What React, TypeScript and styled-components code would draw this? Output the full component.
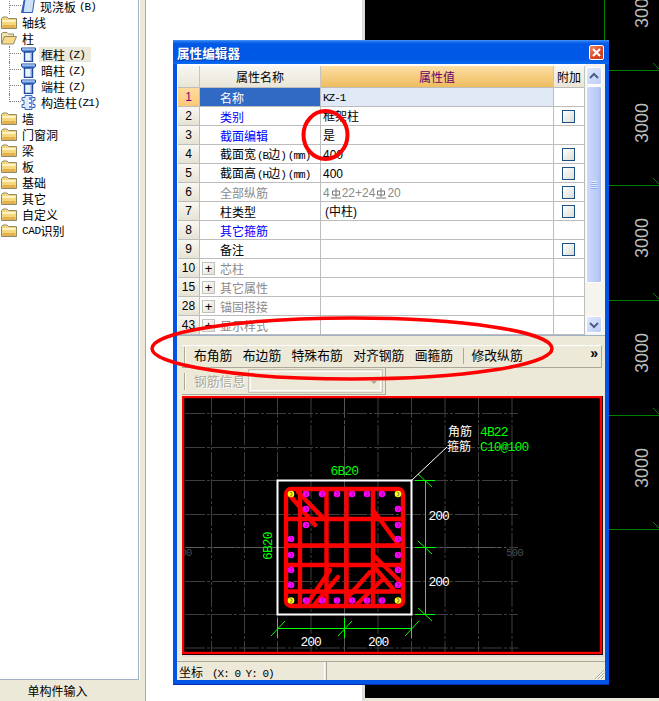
import React from "react";
import styled, { createGlobalStyle } from "styled-components";

const CJK = `"Noto Sans CJK SC", "Liberation Sans", sans-serif`;
const MONO = `"Liberation Mono", "Noto Sans CJK SC", monospace`;

const Global = createGlobalStyle`
  html, body { margin: 0; padding: 0; background: #fff; overflow: hidden; }
  * { box-sizing: border-box; }
`;

const Page = styled.div`
  position: relative;
  display: flex;
  width: 659px;
  height: 701px;
  overflow: hidden;
  font: 12px/16px ${CJK};
  color: #000;
`;

/* ---------- left tree ---------- */
const TreePanel = styled.div`
  display: flex;
  flex-direction: column;
  width: 140px;
  height: 100%;
  padding-right: 1px;
  background: #fff;
`;
const TreeScroll = styled.div`
  flex: 1;
  overflow: hidden;
  border-right: 1px solid #9fb0c6;
  border-bottom: 1px solid #9fb0c6;
`;
const TreeList = styled.div`
  margin-top: -2px;
`;
const TreeRow = styled.div`
  display: flex;
  align-items: center;
  height: 16px;
  padding-left: 1px;
  white-space: nowrap;
`;
const ChildRow = styled.div`
  display: flex;
  align-items: center;
  height: 16px;
  padding-left: 9px;
  white-space: nowrap;
`;
const Connector = styled.span<{ $last?: boolean }>`
  position: relative;
  align-self: flex-start;
  flex: none;
  width: 12px;
  height: ${(p) => (p.$last ? "8px" : "16px")};
  border-left: 1px dotted #808080;
  &::after {
    content: "";
    position: absolute;
    left: 0;
    right: 0;
    top: 7px;
    height: 1px;
    background: repeating-linear-gradient(90deg, #808080 0 1px, transparent 1px 2px);
  }
`;
const TreeLabel = styled.span<{ $selected?: boolean }>`
  display: inline-flex;
  align-items: center;
  height: 15px;
  margin-left: 3px;
  padding: 1px ${(p) => (p.$selected ? "6px" : "2px")} 0 2px;
  background: ${(p) => (p.$selected ? "#ECE9D8" : "transparent")};
`;
const Lat = styled.span<{ $gap?: number; $track?: number }>`
  font: 11px/14px ${MONO};
  letter-spacing: ${(p) => p.$track ?? -1}px;
  margin-left: ${(p) => p.$gap ?? 0}px;
  color: inherit;
`;
const TabLabel = styled.div`
  height: 21px;
  margin-right: -1px;
  background: #ece9d8;
  text-align: center;
  line-height: 22px;
  padding-right: 25px;
`;
const Splitter = styled.div`
  width: 6px;
  height: 100%;
  background: #ece9d8;
  border-right: 1px solid #a9a89c;
`;
const Workspace = styled.div`
  width: 219px;
  height: 100%;
  background: #fff;
  border-right: 3px solid #dcdcd8;
`;
const CadColumn = styled.div`
  flex: 1;
  display: flex;
  flex-direction: column;
  height: 100%;
`;
const CadSvg = styled.svg`
  display: block;
  flex: 1;
  width: 100%;
  min-height: 0;
  background: #000;
`;
const CadStrip = styled.div`
  height: 3px;
  background: #ece9d8;
`;

/* ---------- floating dialog ---------- */
const Dialog = styled.div`
  position: absolute;
  left: 173px;
  top: 40px;
  width: 436px;
  height: 645px;
  display: flex;
  flex-direction: column;
  background: #0054e3;
  border-top: 1px solid #3d8bf5;
  border-bottom: 1px solid #0a2fb0;
`;
const TitleBar = styled.div`
  flex: none;
  height: 23px;
  display: flex;
  align-items: center;
  justify-content: space-between;
  padding: 0 5px 0 4px;
  background: linear-gradient(#2a7bf0 0, #0058e6 12%, #0058e6 80%, #0a6cf2 100%);
`;
const TitleText = styled.span`
  font: 700 12.6px/16px ${CJK};
  color: #fff;
  text-shadow: 1px 1px 0 #0a3bb0;
`;
const CloseButton = styled.button`
  display: flex;
  align-items: center;
  justify-content: center;
  width: 15px;
  height: 15px;
  padding: 0;
  border: 1px solid #fff;
  border-radius: 2px;
  background: linear-gradient(135deg, #f08a6a, #d9431f 60%, #c73a1a);
`;
const Client = styled.div`
  flex: 1;
  min-height: 0;
  display: flex;
  flex-direction: column;
  margin: 0 4px 4px;
  background: #ece9d8;
`;
const GridArea = styled.div`
  flex: none;
  display: flex;
  height: 272px;
  padding: 2px 0 0 1px;
  background: #fff;
  border-bottom: 1px solid #9db0c6;
`;
const Table = styled.div`
  width: 407px;
  height: 269px;
  overflow: hidden;
`;
const Row = styled.div<{ $header?: boolean }>`
  display: grid;
  grid-template-columns: 22px 121px 233px 31px;
  height: ${(p) => (p.$header ? "22px" : "19px")};
`;
const NumCell = styled.div<{ $active?: boolean }>`
  display: flex;
  align-items: center;
  justify-content: center;
  font: 12px/16px "Liberation Sans", sans-serif;
  color: ${(p) => (p.$active ? "#800080" : "#000")};
  background: ${(p) =>
    p.$active ? "linear-gradient(#ffdc9e, #fbc878)" : "linear-gradient(#f8f7f1, #e6e3d5)"};
  border-right: 1px solid #bdbdbd;
  border-bottom: 1px solid #bdbdbd;
`;
const HeadCell = styled.div<{ $value?: boolean }>`
  display: flex;
  align-items: center;
  justify-content: center;
  color: ${(p) => (p.$value ? "#6a006a" : "#000")};
  background: ${(p) =>
    p.$value ? "linear-gradient(#fbdfa4, #efbc5f)" : "linear-gradient(#f8f7f1, #e9e6d8)"};
  border-right: 1px solid #c4c4c0;
  border-bottom: 1px solid #bdbdbd;
`;
const NameCell = styled.div<{ $tone?: "blue" | "grey"; $active?: boolean; $group?: boolean }>`
  display: flex;
  align-items: center;
  gap: 5px;
  padding: 1px 0 0 ${(p) => (p.$group ? "2px" : "20px")};
  white-space: nowrap;
  overflow: hidden;
  color: ${(p) =>
    p.$active ? "#fff" : p.$tone === "blue" ? "#0000ff" : p.$tone === "grey" ? "#8a8a8a" : "#000"};
  background: ${(p) => (p.$active ? "#316ac5" : "#fff")};
  border-right: 1px solid #bdbdbd;
  border-bottom: 1px solid #bdbdbd;
`;
const ValueCell = styled.div<{ $active?: boolean; $grey?: boolean }>`
  display: flex;
  align-items: center;
  padding: 1px 0 0 2px;
  white-space: nowrap;
  font-family: "Liberation Sans", ${CJK};
  color: ${(p) => (p.$grey ? "#8a8a8a" : "#000")};
  background: ${(p) => (p.$active ? "#e0e9f5" : "#fff")};
  border-right: 1px solid #bdbdbd;
  border-bottom: 1px solid #bdbdbd;
`;
const Indented = styled.span`
  margin-left: 2px;
`;
const AddCell = styled.div`
  display: flex;
  align-items: center;
  justify-content: center;
  padding-right: 1px;
  background: #fff;
  border-right: 1px solid #bdbdbd;
  border-bottom: 1px solid #bdbdbd;
`;
const Check = styled.span`
  display: block;
  width: 13px;
  height: 13px;
  border: 1px solid #1c5180;
  background: linear-gradient(135deg, #fff, #dcdcd6);
`;
const Expander = styled.span`
  flex: none;
  display: flex;
  align-items: center;
  justify-content: center;
  width: 13px;
  height: 13px;
  margin-top: -1px;
  border: 1px solid #c2c2bc;
  background: linear-gradient(135deg, #fff, #e2e0d6);
  font: 13px/11px "Liberation Sans", sans-serif;
  color: #000;
`;

/* scrollbar */
const ScrollBar = styled.div`
  flex: 1;
  display: flex;
  flex-direction: column;
  align-items: center;
  margin-top: -2px;
  padding: 3px 2px 2px 0;
  background: #f5f5ee;
`;
const ScrollButton = styled.div<{ $h: number }>`
  flex: none;
  display: flex;
  align-items: center;
  justify-content: center;
  width: 16px;
  height: ${(p) => p.$h}px;
  border: 1px solid #fff;
  border-radius: 2px;
  background: linear-gradient(135deg, #dfe8fd, #bccdf7);
`;
const ScrollThumb = styled.div`
  flex: none;
  display: flex;
  flex-direction: column;
  justify-content: center;
  align-items: center;
  gap: 1px;
  width: 16px;
  height: 197px;
  margin-top: 1px;
  border: 1px solid #fff;
  border-radius: 2px;
  background: linear-gradient(90deg, #ccd9fa, #b9cbf6 70%, #a9bef0);
`;
const GripLine = styled.i`
  display: block;
  width: 6px;
  height: 1px;
  background: #e8efff;
  box-shadow: 0 1px 0 #8faaf0;
`;
const ScrollSpacer = styled.div`
  flex: 1;
`;

/* toolbars */
const Toolbar = styled.div`
  flex: none;
  display: flex;
  align-items: center;
  height: 23px;
  margin: 9px 3px 0 5px;
  padding: 0 0 3px 2px;
  border-top: 1px solid #fff;
  border-right: 1px solid #aca899;
  border-bottom: 1px solid #aca899;
  font-size: 12.8px;
`;
const Handle = styled.span`
  flex: none;
  width: 2px;
  height: 17px;
  margin-right: 8px;
  border-left: 1px solid #aca899;
  border-right: 1px solid #fff;
`;
const ToolItem = styled.span`
  flex: none;
  margin-right: 10.4px;
  white-space: nowrap;
`;
const ToolSep = styled.span`
  flex: none;
  width: 1px;
  height: 16px;
  margin: 2px 8px 0 -1px;
  background: #aca899;
`;
const Overflow = styled.span`
  margin-left: auto;
  margin-right: 3px;
  margin-top: -4px;
  font: 700 14px/12px "Liberation Sans", sans-serif;
`;
const SubBar = styled.div`
  flex: none;
  display: flex;
  align-items: center;
  width: 204px;
  height: 27px;
  margin: 0 0 1px 5px;
  padding-left: 2px;
  border-right: 1px solid #aca899;
  border-bottom: 1px solid #aca899;
`;
const DisabledLabel = styled.span`
  flex: none;
  width: 54px;
  font-size: 12.8px;
  color: #aca899;
  text-shadow: 1px 1px 0 #fff;
`;
const Combo = styled.div`
  position: relative;
  flex: none;
  width: 135px;
  height: 24px;
  border: 1px solid #c9c6b6;
  outline: 1px solid #fff;
  outline-offset: -3px;
`;
const ComboArrow = styled.span`
  position: absolute;
  right: 5px;
  top: 11px;
  width: 0;
  height: 0;
  border: 3px solid transparent;
  border-top-color: #aca899;
`;
const CanvasFrame = styled.div`
  flex: none;
  width: 423px;
  height: 261px;
  margin-left: 5px;
  border-right: 2px solid #dfdfd8;
  border-bottom: 2px solid #dfdfd8;
`;
const CanvasSvg = styled.svg`
  display: block;
  width: 421px;
  height: 259px;
`;
const StatusBar = styled.div`
  position: relative;
  flex: 1;
  min-height: 0;
  display: flex;
  margin-top: 4px;
  border-top: 1px solid #aca899;
`;
const StatusCell = styled.div`
  flex: none;
  width: 148px;
  padding: 2px 0 0 2px;
  white-space: nowrap;
  border-right: 1px solid #fff;
`;
const StatusGap = styled.div`
  flex: none;
  width: 2px;
  margin-right: 1px;
  border-right: 1px solid #aca899;
`;
const Grip = styled.svg`
  position: absolute;
  right: 0;
  bottom: 0;
`;
const Overlay = styled.svg`
  position: absolute;
  left: 0;
  top: 0;
  width: 659px;
  height: 701px;
  pointer-events: none;
`;
const RebarSvg = styled.svg`
  margin: 0 1px;
`;

/* ---------- icons ---------- */
const FolderIcon = () => (
  <svg width="16" height="14" viewBox="0 0 16 14">
    <path d="M.5 3.5 2 2h4l1.5 1.5h8v10H.5z" fill="#f6d77f" stroke="#8d8a6a" />
    <path d="M1.5 5h13v2h-13z" fill="#fff3c4" />
    <path d="M1.5 10h13v3h-13z" fill="#e4b24a" />
  </svg>
);
const OpenFolderIcon = () => (
  <svg width="16" height="14" viewBox="0 0 16 14">
    <path d="M.5 13V2.5L2 1.5h4l1.5 1.5h5v2.5" fill="#f4e4ae" stroke="#8d8a6a" />
    <path d="M.5 13 3.5 5.5h12l-3 7.5z" fill="#f8d98a" stroke="#8d8a6a" />
  </svg>
);
const ColumnIcon = () => (
  <svg width="15" height="15" viewBox="0 0 15 15">
    <path d="M.5 1h14v2.5l-2 1.5h-10L.5 3.5z" fill="#5d8fe0" stroke="#1f4a9c" />
    <path d="M1 1.5h13v1H1z" fill="#cfe0fb" />
    <path d="M3.5 5h8v9.5h-8z" fill="#eaf1fd" stroke="#1f4a9c" strokeWidth="1.4" />
    <path d="M9.5 5.5h1.5v8.5H9.500z" fill="#7ea6ea" />
  </svg>
);
const ConstructIcon = () => (
  <svg width="15" height="15" viewBox="0 0 15 15">
    <path d="M4 .5h7v2h3v3h-2v4h2v3h-3v2H4v-2H1v-3h2v-4H1v-3h3z" fill="#dfe9fb" stroke="#3b65b5" />
    <path d="M8 2h3v11H8z" fill="#5f8de0" />
    <path d="M8 5h2v2H8zM8 9h2v2H8z" fill="#fff" />
  </svg>
);
const SlabIcon = () => (
  <svg width="14" height="16" viewBox="0 0 14 16">
    <path d="M3.5.5h10l-2 14H.5z" fill="#cfe0fb" stroke="#2d5cb0" />
    <path d="M.8 14.500 3.5.5l1 .6L2.600 14z" fill="#2d5cb0" />
  </svg>
);
const Chevron = ({ down }: { down?: boolean }) => (
  <svg width="10" height="8" viewBox="0 0 10 8">
    <path d={down ? "M1 2l4 4 4-4" : "M1 6l4-4 4 4"} fill="none" stroke="#4d6185" strokeWidth="2" />
  </svg>
);
const RebarGlyph = () => (
  <RebarSvg width="10" height="12" viewBox="0 0 10 12">
    <path d="M1.5 4h7v4h-7zM5 1v9M0 11h10" fill="none" stroke="#777" strokeWidth="1" />
  </RebarSvg>
);

/* ---------- data ---------- */
type Prop = {
  n: string;
  name: React.ReactNode;
  tone?: "blue" | "grey";
  value?: React.ReactNode;
  valueGrey?: boolean;
  check?: boolean;
  group?: boolean;
  active?: boolean;
};

const rows: Prop[] = [
  { n: "1", name: "名称", value: <Lat>KZ-1</Lat>, active: true },
  { n: "2", name: "类别", tone: "blue", value: "框架柱", check: true },
  { n: "3", name: "截面编辑", tone: "blue", value: "是" },
  {
    n: "4",
    name: (
      <span>
        截面宽<Lat $gap={1}>(B</Lat>边<Lat>)</Lat>
        <Lat $gap={2}>(mm)</Lat>
      </span>
    ),
    value: "400",
    check: true,
  },
  {
    n: "5",
    name: (
      <span>
        截面高<Lat $gap={1}>(H</Lat>边<Lat>)</Lat>
        <Lat $gap={2}>(mm)</Lat>
      </span>
    ),
    value: "400",
    check: true,
  },
  {
    n: "6",
    name: "全部纵筋",
    tone: "grey",
    value: (
      <>
        4<RebarGlyph />
        22+24
        <RebarGlyph />
        20
      </>
    ),
    valueGrey: true,
    check: true,
  },
  { n: "7", name: "柱类型", value: <Indented>(中柱)</Indented>, check: true },
  { n: "8", name: "其它箍筋", tone: "blue" },
  { n: "9", name: "备注", check: true },
  { n: "10", name: "芯柱", tone: "grey", group: true },
  { n: "15", name: "其它属性", tone: "grey", group: true },
  { n: "28", name: "锚固搭接", tone: "grey", group: true },
  { n: "43", name: "显示样式", tone: "grey", group: true },
];

const CadBackground = () => (
  <CadSvg viewBox="365 0 294 698" preserveAspectRatio="none">
    <line x1="604.500" y1="0" x2="604.500" y2="41" stroke="#008000" />
    {[70, 185, 300, 415, 529].map((y) => (
      <g key={y} stroke="#008000">
        <line x1="604" y1={y + 0.5} x2="659" y2={y + 0.5} />
        <line x1="653" y1={y - 7} x2="660" y2={y} />
      </g>
    ))}
    {[8, 123, 238, 353, 468].map((y) => (
      <text
        key={y}
        transform={`translate(648 ${y}) rotate(-90)`}
        textAnchor="middle"
        fontFamily="Liberation Sans"
        fontSize="18"
        fill="#bdbdbd"
      >
        3000
      </text>
    ))}
  </CadSvg>
);

const Diagram = () => {
  const gx = [211.5, 244.5, 277.5, 311, 344.5, 378, 411.5, 445, 478.5, 512];
  const gy = [413.5, 447.5, 480.5, 514.5, 547.5, 581.5, 614.5, 648];
  const bars: [number, number, number, number][] = [
    [300, 489, 300, 606],
    [326.5, 489, 326.5, 606],
    [346.5, 489, 346.5, 606],
    [373, 489, 373, 606],
    [288, 519, 403, 519],
    [288, 545.5, 403, 545.5],
    [288, 565, 403, 565],
    [288, 591.5, 403, 591.5],
    [287, 492, 315, 525],
    [298, 492, 324, 519],
    [373, 510, 398, 544],
    [373, 555, 403, 584],
    [375, 568, 394, 590],
    [307, 604, 330, 570],
    [315, 604, 338, 577],
    [347, 598, 370, 572],
    [357, 604, 382, 580],
  ];
  const magenta: [number, number][] = [
    ...[306, 322, 337, 352, 367, 382].flatMap((x): [number, number][] => [
      [x, 494],
      [x, 600.5],
    ]),
    ...[539, 555, 570, 585].map((y): [number, number] => [291, y]),
    ...[509, 525, 539, 555, 570, 585].map((y): [number, number] => [398, y]),
    [306, 509],
    [306, 525],
  ];
  const yellow: [number, number][] = [
    [291, 494],
    [398, 494],
    [291, 600.5],
    [398, 600.5],
  ];
  return (
    <CanvasSvg viewBox="182 396 421 259">
      <rect x="182" y="396" width="421" height="259" fill="#000" />
      <g stroke="#3e3e3e" strokeDasharray="20 2 3 2">
        {gx.map((x) => (
          <line key={x} x1={x} y1="398" x2={x} y2="652" />
        ))}
        {gy.map((y) => (
          <line key={y} x1="185" y1={y} x2="518" y2={y} />
        ))}
      </g>
      <line x1="185" y1="547.5" x2="505" y2="547.5" stroke="#5c5c5c" strokeDasharray="20 3 3 3" />
      <line x1="344.5" y1="398" x2="344.5" y2="652" stroke="#555" strokeDasharray="20 3 3 3" />
      <g fontFamily="Liberation Mono" fontSize="11" letterSpacing="-1" fill="#4c4c4c">
        <text x="506" y="556">500</text>
        <text x="174.500" y="556">500</text>
      </g>

      <rect x="277.5" y="480.5" width="134" height="134" fill="none" stroke="#fff" strokeWidth="2" />

      <g stroke="#ff0000" strokeWidth="4.400" strokeLinecap="round">
        <rect x="286" y="489" width="117" height="117" rx="5" fill="none" />
        {bars.map(([a, b, c, d], i) => (
          <line key={i} x1={a} y1={b} x2={c} y2={d} />
        ))}
      </g>
      {magenta.map(([x, y], i) => (
        <g key={i}>
          <circle cx={x} cy={y} r="3.300" fill="#ff00ff" />
          <path d={`M${x - 1} ${y - 2}a2 2 0 1 1 0 4`} stroke="#a000a0" fill="none" />
        </g>
      ))}
      {yellow.map(([x, y], i) => (
        <g key={i}>
          <circle cx={x} cy={y} r="3.300" fill="#ffff00" />
          <path d={`M${x - 1} ${y - 2}a2 2 0 1 1 0 4`} stroke="#777" fill="none" />
        </g>
      ))}

      <g stroke="#00ff00" fill="none">
        <path d="M425.5 480v135M415 480.5h20M415 547.5h20M415 614.5h20" />
        <path d="M418 474l14 13M418 541l14 13M418 608l14 13" />
        <path d="M277 628.5h135M277.5 618v20M344.5 618v20M411.5 618v20" />
        <path d="M271 636l14-15M338 636l14-15M405 636l14-15" />
      </g>
      <line x1="412" y1="480" x2="447" y2="447" stroke="#fff" />

      <g fontFamily="Liberation Mono" fontSize="13" letterSpacing="-1" fill="#fff">
        <text x="428.500" y="519.500">200</text>
        <text x="428.500" y="586">200</text>
        <text x="300.500" y="646">200</text>
        <text x="368" y="646">200</text>
      </g>
      <g fontFamily="Liberation Mono" fontSize="13" letterSpacing="-0.9" fill="#00ff00">
        <text x="330.500" y="475">6B20</text>
        <text transform="translate(272 560) rotate(-90)">6B20</text>
        <text x="480" y="436">4B22</text>
        <text x="480" y="450.500">C10@100</text>
      </g>
      <g fontFamily="Noto Sans CJK SC" fontSize="12" fill="#fff">
        <text x="448" y="435.500">角筋</text>
        <text x="447" y="450.500">箍筋</text>
      </g>

      <rect x="183" y="397" width="418" height="256" fill="none" stroke="#ff0000" strokeWidth="2.400" />
    </CanvasSvg>
  );
};

const TREE_TOP = ["轴线"];
const TREE_BOTTOM = ["墙", "门窗洞", "梁", "板", "基础", "其它", "自定义"];

export default function App() {
  return (
    <Page>
      <Global />
      <TreePanel>
        <TreeScroll>
          <TreeList>
            <ChildRow>
              <Connector />
              <SlabIcon />
              <TreeLabel>
                现浇板<Lat $gap={3}>(B)</Lat>
              </TreeLabel>
            </ChildRow>
            {TREE_TOP.map((t) => (
              <TreeRow key={t}>
                <FolderIcon />
                <TreeLabel>{t}</TreeLabel>
              </TreeRow>
            ))}
            <TreeRow>
              <OpenFolderIcon />
              <TreeLabel>柱</TreeLabel>
            </TreeRow>
            <ChildRow>
              <Connector />
              <ColumnIcon />
              <TreeLabel $selected>
                框柱<Lat $gap={3}>(Z)</Lat>
              </TreeLabel>
            </ChildRow>
            <ChildRow>
              <Connector />
              <ColumnIcon />
              <TreeLabel>
                暗柱<Lat $gap={3}>(Z)</Lat>
              </TreeLabel>
            </ChildRow>
            <ChildRow>
              <Connector />
              <ColumnIcon />
              <TreeLabel>
                端柱<Lat $gap={3}>(Z)</Lat>
              </TreeLabel>
            </ChildRow>
            <ChildRow>
              <Connector $last />
              <ConstructIcon />
              <TreeLabel>
                构造柱<Lat>(Z1)</Lat>
              </TreeLabel>
            </ChildRow>
            {TREE_BOTTOM.map((t) => (
              <TreeRow key={t}>
                <FolderIcon />
                <TreeLabel>{t}</TreeLabel>
              </TreeRow>
            ))}
            <TreeRow>
              <FolderIcon />
              <TreeLabel>
                <Lat $track={-0.4}>CAD</Lat>识别
              </TreeLabel>
            </TreeRow>
          </TreeList>
        </TreeScroll>
        <TabLabel>单构件输入</TabLabel>
      </TreePanel>
      <Splitter />
      <Workspace />
      <CadColumn>
        <CadBackground />
        <CadStrip />
      </CadColumn>

      <Dialog>
        <TitleBar>
          <TitleText>属性编辑器</TitleText>
          <CloseButton aria-label="关闭">
            <svg width="9" height="9" viewBox="0 0 9 9">
              <path d="M1 1l7 7M8 1 1 8" stroke="#fff" strokeWidth="2.2" />
            </svg>
          </CloseButton>
        </TitleBar>
        <Client>
          <GridArea>
            <Table>
              <Row $header>
                <HeadCell />
                <HeadCell>属性名称</HeadCell>
                <HeadCell $value>属性值</HeadCell>
                <HeadCell>附加</HeadCell>
              </Row>
              {rows.map((r) => (
                <Row key={r.n}>
                  <NumCell $active={r.active}>{r.n}</NumCell>
                  <NameCell $tone={r.tone} $active={r.active} $group={r.group}>
                    {r.group && <Expander>+</Expander>}
                    {r.name}
                  </NameCell>
                  <ValueCell $active={r.active} $grey={r.valueGrey}>
                    {r.value}
                  </ValueCell>
                  <AddCell>{r.check && <Check />}</AddCell>
                </Row>
              ))}
            </Table>
            <ScrollBar>
              <ScrollButton $h={18}>
                <Chevron />
              </ScrollButton>
              <ScrollThumb>
                <GripLine />
                <GripLine />
                <GripLine />
                <GripLine />
              </ScrollThumb>
              <ScrollSpacer />
              <ScrollButton $h={17}>
                <Chevron down />
              </ScrollButton>
            </ScrollBar>
          </GridArea>

          <Toolbar>
            <Handle />
            <ToolItem>布角筋</ToolItem>
            <ToolItem>布边筋</ToolItem>
            <ToolItem>特殊布筋</ToolItem>
            <ToolItem>对齐钢筋</ToolItem>
            <ToolItem>画箍筋</ToolItem>
            <ToolSep />
            <ToolItem>修改纵筋</ToolItem>
            <Overflow>»</Overflow>
          </Toolbar>
          <SubBar>
            <Handle />
            <DisabledLabel>钢筋信息</DisabledLabel>
            <Combo>
              <ComboArrow />
            </Combo>
          </SubBar>
          <CanvasFrame>
            <Diagram />
          </CanvasFrame>
          <StatusBar>
            <StatusCell>
              坐标<Lat $gap={9}>(X: 0 Y: 0)</Lat>
            </StatusCell>
            <StatusGap />
            <Grip width="12" height="12" viewBox="0 0 12 12">
              <path d="M11 2 2 11M11 5l-6 6M11 8l-3 3" stroke="#aca899" />
              <path d="M11 3 3 11M11 6l-5 5M11 9l-2 2" stroke="#fff" />
            </Grip>
          </StatusBar>
        </Client>
      </Dialog>

      <Overlay viewBox="0 0 659 701">
        <ellipse cx="325.500" cy="135" rx="22" ry="24" fill="none" stroke="#ff0000" strokeWidth="4" />
        <ellipse cx="352" cy="348.500" rx="200" ry="30.500" fill="none" stroke="#ff0000" strokeWidth="3.500" />
      </Overlay>
    </Page>
  );
}
